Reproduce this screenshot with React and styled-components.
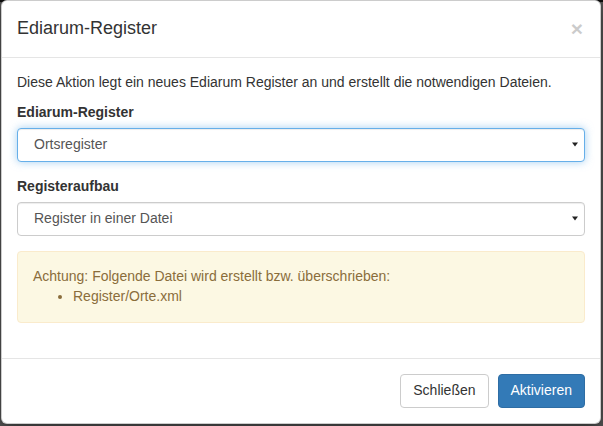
import React from 'react';
import styled, { createGlobalStyle } from 'styled-components';

const GlobalStyle = createGlobalStyle`
  * { box-sizing: border-box; }
  html, body {
    margin: 0;
    padding: 0;
    height: 100%;
    font-family: "Liberation Sans", Arial, sans-serif;
    font-size: 14px;
    line-height: 1.42857;
    color: #333;
    background: linear-gradient(#0d0d0d 0 2px, #575757 2px);
  }
  #root { height: 100%; }
`;

const Backdrop = styled.div`
  height: 100%;
  padding: 0 2px 0 1px;
  display: flex;
  align-items: flex-start;
`;

const Modal = styled.div`
  width: 100%;
  background: #fff;
  border: 1px solid rgba(0, 0, 0, 0.2);
  border-radius: 6px;
  box-shadow: 0 5px 15px rgba(0, 0, 0, 0.5);
  display: flex;
  flex-direction: column;
`;

const Header = styled.div`
  padding: 15px;
  border-bottom: 1px solid #e5e5e5;
  display: flex;
  justify-content: space-between;
  align-items: flex-start;
`;

const Title = styled.h4`
  margin: 0;
  font-size: 18px;
  font-weight: 400;
  line-height: 1.42857;
  color: #333;
`;

const Close = styled.button`
  background: none;
  border: 0;
  padding: 0;
  margin-top: 2px;
  margin-right: 2px;
  font-family: "Liberation Sans", Arial, sans-serif;
  font-size: 21px;
  font-weight: 700;
  line-height: 1;
  color: #000;
  opacity: 0.2;
  cursor: pointer;
`;

const Body = styled.div`
  padding: 15px;
`;

const Intro = styled.p`
  margin: 0 0 10px;
`;

const FormGroup = styled.div`
  margin-bottom: 15px;
  display: flex;
  flex-direction: column;
  align-items: flex-start;
`;

const Label = styled.label`
  font-weight: 700;
  margin-bottom: 5px;
`;

const Select = styled.div`
  width: 100%;
  height: 34px;
  padding: 0 6px 0 16px;
  display: flex;
  align-items: center;
  justify-content: space-between;
  color: #555;
  background: #fff;
  border: 1px solid ${({ $focused }) => ($focused ? '#66afe9' : '#ccc')};
  border-radius: 4px;
  box-shadow: ${({ $focused }) =>
    $focused
      ? 'inset 0 1px 1px rgba(0,0,0,.075), 0 0 8px rgba(102,175,233,.6)'
      : 'inset 0 1px 1px rgba(0,0,0,.075)'};
`;

const Caret = styled.svg`
  width: 6px;
  height: 5px;
  flex-shrink: 0;
`;

const Alert = styled.div`
  margin-top: 15px;
  margin-bottom: 20px;
  padding: 15px;
  background: #fcf8e3;
  border: 1px solid #faebcc;
  border-radius: 4px;
  color: #8a6d3b;
`;

const FileList = styled.ul`
  margin: 0;
  padding-left: 40px;
`;

const Footer = styled.div`
  padding: 15px;
  border-top: 1px solid #e5e5e5;
  display: flex;
  justify-content: flex-end;
  gap: 9px;
`;

const Button = styled.button`
  height: 34px;
  padding: 6px 12px;
  font-family: "Liberation Sans", Arial, sans-serif;
  font-size: 14px;
  line-height: 1.42857;
  border-radius: 4px;
  border: 1px solid ${({ $primary }) => ($primary ? '#2e6da4' : '#ccc')};
  background: ${({ $primary }) => ($primary ? '#337ab7' : '#fff')};
  color: ${({ $primary }) => ($primary ? '#fff' : '#333')};
  cursor: pointer;
`;

const SelectBox = ({ value, focused }) => (
  <Select $focused={focused}>
    <span>{value}</span>
    <Caret viewBox="0 0 6 5">
      <path d="M0 0.5 H6 L3 4.5 Z" fill="#222" />
    </Caret>
  </Select>
);

export default function App() {
  return (
    <>
      <GlobalStyle />
      <Backdrop>
        <Modal>
          <Header>
            <Title>Ediarum-Register</Title>
            <Close>×</Close>
          </Header>
          <Body>
            <Intro>
              Diese Aktion legt ein neues Ediarum Register an und erstellt die notwendigen Dateien.
            </Intro>
            <FormGroup>
              <Label>Ediarum-Register</Label>
              <SelectBox value="Ortsregister" focused />
            </FormGroup>
            <FormGroup>
              <Label>Registeraufbau</Label>
              <SelectBox value="Register in einer Datei" />
            </FormGroup>
            <Alert>
              Achtung: Folgende Datei wird erstellt bzw. überschrieben:
              <FileList>
                <li>Register/Orte.xml</li>
              </FileList>
            </Alert>
          </Body>
          <Footer>
            <Button>Schließen</Button>
            <Button $primary>Aktivieren</Button>
          </Footer>
        </Modal>
      </Backdrop>
    </>
  );
}
